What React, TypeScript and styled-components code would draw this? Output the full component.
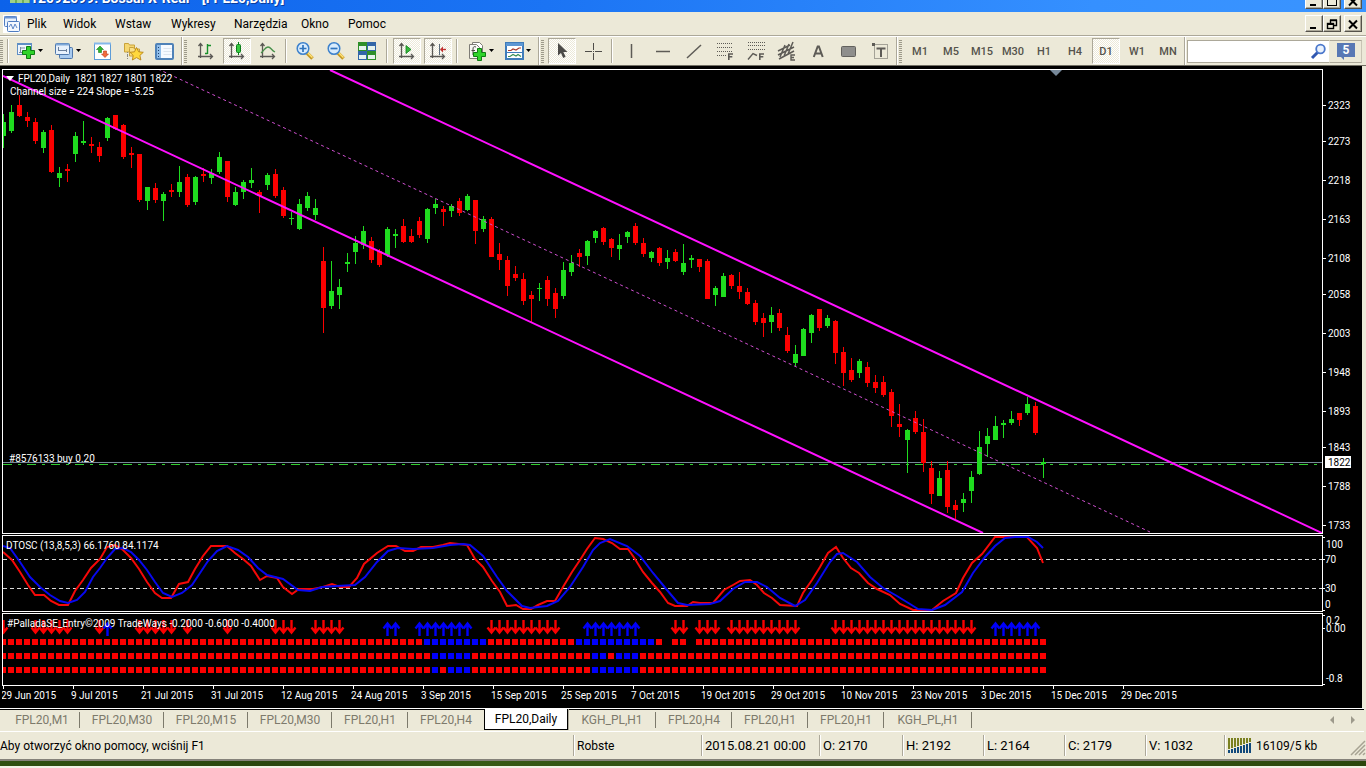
import React from "react";
import styled, { createGlobalStyle, css } from "styled-components";

const FONT = `Roboto, "Liberation Sans", sans-serif`;
const FACE = "#ece9d8";
const SHADOW = "#aca899";

const GlobalStyle = createGlobalStyle`
  *, *::before, *::after { box-sizing: border-box; }
  body { margin: 0; background: ${FACE}; font-family: ${FONT}; }
  button, input { font-family: inherit; margin: 0; }
`;

/* ---------- window frame ---------- */

const Page = styled.div`
  min-height: 100vh;
  display: flex;
  flex-direction: column;
  background: ${FACE};
`;

const TitleBar = styled.header`
  height: 12px;
  overflow: hidden;
  display: flex;
  align-items: flex-end;
  padding: 0 4px 0 10px;
  background: linear-gradient(90deg, #0c62ea 0%, #1b74f4 40%, #3590ff 80%, #3a94ff 100%);
`;

const TitleIcon = styled.div`
  align-self: flex-start;
  width: 20px;
  height: 3px;
  background: repeating-linear-gradient(90deg, #9fd28a 0 5px, #6fae58 5px 7px);
`;

const Title = styled.h1`
  flex: 1;
  margin: 0;
  height: 28px;
  line-height: 28px;
  font-size: 14px;
  font-weight: 700;
  color: #fff;
  text-shadow: 1px 1px 0 #0a3c9c;
  white-space: pre;
`;

const FrameButtons = styled.div<{ $gap?: number }>`
  display: flex;
  align-items: center;
  padding-bottom: ${(p) => p.$gap ?? 0}px;
`;

const FrameButton = styled.button<{ $apart?: boolean }>`
  width: 18px;
  height: 17px;
  padding: 0;
  margin-left: ${(p) => (p.$apart ? 3 : 0)}px;
  display: flex;
  align-items: center;
  justify-content: center;
  background: ${FACE};
  border: 1px solid;
  border-color: #fff #55524a #55524a #fff;
  box-shadow: inset -1px -1px 0 ${SHADOW};
`;

const MenuBar = styled.nav`
  height: 24px;
  display: flex;
  align-items: center;
  padding: 0 4px 0 3px;
  border-bottom: 1px solid ${SHADOW};
`;

const MenuIcon = styled.span`
  width: 17px;
  height: 18px;
  margin-right: 1px;
  display: flex;
`;

const MenuItem = styled.button<{ $w: number }>`
  width: ${(p) => p.$w}px;
  height: 20px;
  padding: 0 6px;
  border: 0;
  background: none;
  font-size: 12px;
  text-align: left;
  color: #000;
`;

const Spring = styled.div`
  flex: 1;
`;

/* ---------- toolbar ---------- */

const ToolBar = styled.div`
  height: 30px;
  display: flex;
  align-items: center;
  padding-right: 4px;
  border-top: 1px solid #fff;
  border-bottom: 1px solid #716f64;
  background: ${FACE};
`;

const Grip = styled.div<{ $w: number }>`
  width: ${(p) => p.$w}px;
  height: 23px;
  background: repeating-linear-gradient(180deg, #9d9a8a 0 1px, transparent 1px 2px) left / 3px 100% no-repeat;
`;

const Separator = styled.div<{ $w: number; $tall?: boolean }>`
  width: ${(p) => p.$w}px;
  height: ${(p) => (p.$tall ? 28 : 24)}px;
  display: flex;
  justify-content: center;
  &::before {
    content: "";
    width: 2px;
    background: ${SHADOW};
    border-right: 1px solid #fff;
  }
`;

const ToolButton = styled.button<{ $on?: boolean; $wide?: boolean }>`
  width: ${(p) => (p.$wide ? 38 : 28)}px;
  height: 26px;
  margin: ${(p) => (p.$wide ? "0" : "0 1px 0 2px")};
  padding: 0;
  display: flex;
  align-items: center;
  justify-content: center;
  gap: 2px;
  border: 1px solid transparent;
  background: none;
  font-size: 11px;
  font-weight: 500;
  color: #55534c;
  ${(p) =>
    p.$on &&
    css`
      border-color: ${SHADOW} #fff #fff ${SHADOW};
      background: repeating-conic-gradient(#fff 0 25%, #ece9d8 0 50%) 0 0 / 2px 2px;
    `}
`;

const SearchBox = styled.label`
  flex: 1;
  min-width: 80px;
  height: 23px;
  display: flex;
  align-items: center;
  padding-right: 2px;
  background: #fff;
  border: 1px solid ${SHADOW};
  border-right: 0;
`;

const SearchInput = styled.input`
  flex: 1;
  min-width: 0;
  height: 19px;
  border: 0;
  outline: 0;
  background: none;
  font-size: 12px;
`;

const BubbleButton = styled.button`
  width: 33px;
  height: 23px;
  padding: 0;
  display: flex;
  align-items: center;
  justify-content: center;
  background: ${FACE};
  border: 1px solid;
  border-color: ${SHADOW} #c8c4b4 ${SHADOW} ${FACE};
`;

/* ---------- chart ---------- */

const ChartArea = styled.main`
  flex: 1;
  margin-right: 4px;
  padding: 3px 0 0 2px;
  display: flex;
  flex-direction: column;
  gap: 1px;
  background: #000;
`;

const Pane = styled.section`
  display: flex;
`;

const Plot = styled.div`
  flex: 1;
  min-width: 0;
  border: 1px solid #fff;
`;

const Drawing = styled.svg`
  display: block;
  width: 100%;
  font-family: ${FONT};
  font-size: 10px;
  fill: #fff;
  text {
    white-space: pre;
  }
`;

const AxisColumn = styled.div`
  width: 39px;
`;

const DateAxis = styled.div`
  margin-top: -1px;
  height: 21px;
`;

/* ---------- tabs and status ---------- */

const TabBar = styled.nav`
  height: 23px;
  display: flex;
  align-items: flex-start;
  padding-left: 4px;
  border-top: 1px solid #000;
  border-bottom: 1px solid #fff;
  margin: 1px 2px 0 0;
  box-shadow: 0 -1px 0 #fff;
`;

const Tab = styled.button<{ $w: number; $active?: boolean; $plain?: boolean }>`
  width: ${(p) => p.$w}px;
  height: 20px;
  padding: 0;
  border: 0;
  background: none;
  font-size: 12px;
  line-height: 18px;
  color: #7d7a6c;
  position: relative;
  &::after {
    content: "";
    display: ${(p) => (p.$plain || p.$active ? "none" : "block")};
    position: absolute;
    right: 0;
    top: 2px;
    width: 1px;
    height: 16px;
    background: #7d7a6c;
  }
  ${(p) =>
    p.$active &&
    css`
      height: 21px;
      line-height: 20px;
      margin-top: -1px;
      background: #fff;
      color: #000;
      border: 1px solid #000;
      border-top: 0;
      box-shadow: 1px 0 0 ${SHADOW};
    `}
`;

const TabScroll = styled.button`
  width: 21px;
  height: 20px;
  padding: 0;
  border: 0;
  background: none;
  display: flex;
  align-items: center;
  justify-content: center;
`;

const StatusBar = styled.footer`
  height: 27px;
  display: flex;
  align-items: center;
  font-size: 12px;
  color: #000;
`;

const StatusHelp = styled.div`
  flex: 1;
  font-size: 12px;
  white-space: nowrap;
  overflow: hidden;
`;

const StatusCell = styled.div<{ $w: number; $big?: boolean }>`
  width: ${(p) => p.$w}px;
  height: 21px;
  padding-left: 3px;
  display: flex;
  align-items: center;
  gap: 4px;
  border-left: 1px solid ${SHADOW};
  box-shadow: inset 1px 0 0 #fff;
  font-size: ${(p) => (p.$big ? 13 : 12)}px;
  white-space: nowrap;
`;

const ResizeCorner = styled.svg`
  align-self: flex-end;
  margin-left: auto;
`;

const Desktop = styled.div`
  height: 9px;
  border-top: 2px solid #85827a;
  border-bottom: 2px solid #f1f3e6;
  background: linear-gradient(90deg, #2f5010, #2a470e 20%, #375a14 35%, #2c4a10 60%, #35520f 80%, #2b470d);
`;

/* ---------- data ---------- */

type Candle = [1 | 0, number, number, number, number];

// [rising, high, body top, body bottom, low] in vertical plot units
const CANDLES: Candle[] = [
  [1,114,122,136,148],[1,105,112,131,133],[0,95,105,116,117],[0,112,117,121,127],[0,118,122,141,144],
  [1,130,132,148,153],[0,125,130,172,173],[1,167,173,178,187],[0,164,169,171,182],[1,132,136,154,162],
  [1,121,141,143,145],[0,137,144,146,153],[0,142,147,156,162],[1,117,118,138,141],[0,115,115,129,130],
  [0,124,125,157,159],[0,147,153,155,168],[0,154,154,200,202],[1,187,187,201,210],[0,183,188,200,203],
  [1,192,194,201,221],[0,184,190,192,197],[1,166,182,192,197],[0,174,177,205,207],[1,176,177,202,205],
  [0,168,174,176,182],[1,169,173,178,184],[1,152,157,172,174],[0,161,161,197,202],[1,187,192,205,206],
  [1,180,182,192,199],[1,168,180,183,188],[0,190,192,196,213],[1,173,175,185,190],[0,169,174,196,198],
  [0,187,190,216,218],[1,212,218,219,225],[1,199,204,229,230],[1,192,196,208,211],[1,199,208,215,220],
  [0,247,261,308,333],[1,261,291,306,309],[1,279,287,295,309],[1,253,262,264,272],[1,236,243,252,264],
  [1,226,231,245,249],[0,237,241,260,263],[0,249,251,265,267],[1,227,229,255,257],[1,229,234,236,248],
  [0,219,226,242,243],[0,229,236,242,243],[0,217,221,235,238],[1,208,209,239,243],[1,199,204,208,214],
  [0,206,209,212,226],[1,204,206,211,217],[0,198,201,213,216],[1,194,196,210,211],[0,200,200,231,244],
  [1,216,219,229,232],[0,217,219,257,257],[0,243,254,260,270],[0,256,260,286,296],[0,266,274,278,281],
  [0,273,279,301,305],[0,291,295,299,322],[1,283,288,289,301],[0,276,280,299,306],[0,288,293,309,318],
  [1,262,270,296,299],[1,255,263,272,276],[0,249,253,257,267],[1,240,241,256,265],[1,230,231,238,243],
  [0,227,228,242,245],[0,238,239,248,257],[1,234,245,249,260],[1,231,232,237,243],[0,223,226,243,245],
  [0,238,243,254,257],[1,251,252,258,262],[0,247,248,263,266],[1,250,258,262,269],[0,249,252,261,262],
  [1,244,263,272,275],[1,255,258,260,268],[0,259,259,267,272],[0,259,261,299,299],[1,286,288,295,306],
  [1,273,276,297,297],[0,274,275,286,289],[0,272,286,292,299],[0,288,292,304,305],[0,300,303,322,325],
  [0,313,318,323,337],[1,307,315,322,333],[0,309,313,328,331],[0,327,335,351,353],[1,345,354,363,366],
  [1,328,329,356,356],[1,314,315,333,343],[0,309,309,328,331],[1,315,318,326,328],[0,320,321,353,364],
  [0,347,352,373,386],[0,358,370,380,382],[1,359,361,373,378],[0,362,367,383,387],[0,375,382,388,393],
  [0,376,382,395,397],[0,389,392,416,427],[0,404,424,427,437],[1,429,430,440,473],[0,411,418,432,434],
  [0,419,432,463,472],[0,461,468,494,504],[1,471,478,496,496],[0,461,470,507,513],[0,500,505,510,519],
  [1,493,499,503,512],[1,471,477,491,503],[1,431,447,474,475],[1,428,436,444,457],[1,416,426,440,440],
  [1,420,423,425,438],[1,411,419,423,425],[0,413,413,420,426],[1,397,404,413,415],[0,402,406,433,435],
  [1,458,462,464,478],
];

const barX = (i: number) => 3 + 8 * i;

const PRICES: [string, number][] = [
  ["2323", 105], ["2273", 141], ["2218", 180], ["2163", 219], ["2108", 258], ["2058", 294],
  ["2003", 333], ["1948", 372], ["1893", 411], ["1843", 447], ["1788", 486], ["1733", 525],
];

const OSC_FAST =
  "3,552 12,560 20,572 28,585 35,595 44,595 51,601 59,605 68,605 75,591 83,580 91,568 100,559 107,547 115,545 123,550 131,558 139,569 147,582 155,593 162,598 171,598 179,584 188,582 195,569 203,556 211,546 227,546 235,553 243,559 251,566 260,580 267,576 277,578 283,587 292,594 299,589 313,589 323,587 332,584 340,587 349,587 357,578 364,564 377,553 388,546 396,546 405,551 413,551 421,547 433,547 443,545 450,543 467,545 475,559 483,567 492,581 500,592 507,606 516,605 523,609 531,609 538,605 547,601 555,601 563,587 572,572 580,560 587,549 595,538 603,539 612,543 620,549 628,549 635,559 643,572 652,583 660,592 668,603 675,606 687,606 693,602 700,603 713,603 724,590 733,585 740,581 750,580 757,585 764,593 772,598 780,605 797,606 803,593 812,580 820,567 828,553 836,547 843,558 851,568 859,573 868,583 877,589 890,595 900,604 913,610 932,610 943,601 956,593 963,578 972,563 982,554 995,537 1008,537 1027,537 1037,548 1043,563";
const OSC_SLOW =
  "3,546 10,548 20,562 30,577 40,587 50,595 60,601 68,603 77,600 85,592 93,577 100,568 107,558 115,549 123,548 131,552 139,560 147,570 155,582 163,593 172,597 182,593 192,585 200,573 208,561 217,551 227,546 238,550 248,557 258,568 267,575 283,579 298,590 310,591 322,587 337,586 355,585 365,577 377,562 388,551 398,548 413,549 433,548 450,545 463,544 470,545 483,556 497,577 507,591 522,606 530,608 547,606 558,601 570,587 583,567 593,550 600,543 610,539 627,546 640,556 653,573 667,590 678,603 687,605 710,604 720,601 733,589 745,582 757,582 767,587 780,598 795,606 805,600 817,583 830,562 837,554 843,553 857,562 870,577 883,588 897,596 910,604 918,609 932,610 945,605 962,592 973,573 985,557 995,546 1005,538 1015,537 1028,537 1037,542 1043,548";

const range = (a: number, b: number) => Array.from({ length: b - a + 1 }, (_, i) => a + i);

const SELL = [
  0, ...range(4, 8), 12, ...range(17, 21), 23, 28, ...range(34, 36), ...range(39, 42), ...range(61, 69),
  84, 85, ...range(87, 89), ...range(91, 99), ...range(104, 121),
];
const BUY = [13, 48, 49, ...range(52, 58), ...range(73, 79), ...range(124, 129)];

const TREND_ROWS = [
  { y: 639, blue: [...range(53, 60), ...range(72, 81)], skip: [83, 86] },
  { y: 653, blue: [...range(54, 58), 74, 75, 77, 78, 79], skip: [] as number[] },
  { y: 667, blue: [54, 56, 57, 58, ...range(74, 79)], skip: [] as number[] },
];

const DATES = [
  "29 Jun 2015", "9 Jul 2015", "21 Jul 2015", "31 Jul 2015", "12 Aug 2015", "24 Aug 2015", "3 Sep 2015",
  "15 Sep 2015", "25 Sep 2015", "7 Oct 2015", "19 Oct 2015", "29 Oct 2015", "10 Nov 2015", "23 Nov 2015",
  "3 Dec 2015", "15 Dec 2015", "29 Dec 2015",
];

const MENU: [string, number][] = [
  ["Plik", 36], ["Widok", 52], ["Wstaw", 56], ["Wykresy", 63], ["Narzędzia", 67], ["Okno", 47], ["Pomoc", 52],
];

const TABS: [string, number][] = [
  ["FPL20,M1", 76], ["FPL20,M30", 84], ["FPL20,M15", 84], ["FPL20,M30", 84], ["FPL20,H1", 76], ["FPL20,H4", 76],
  ["FPL20,Daily", 84], ["KGH_PL,H1", 88], ["FPL20,H4", 76], ["FPL20,H1", 76], ["FPL20,H1", 76], ["KGH_PL,H1", 88],
];
const ACTIVE_TAB = 6;

const PERIODS = ["M1", "M5", "M15", "M30", "H1", "H4", "D1", "W1", "MN"];

const READOUTS: [string, number][] = [
  ["2015.08.21 00:00", 118], ["O: 2170", 83], ["H: 2192", 81], ["L: 2164", 81], ["C: 2179", 81], ["V: 1032", 79],
];

/* ---------- icons ---------- */

const Icon = ({ w = 20, h = 20, children }: { w?: number; h?: number; children: React.ReactNode }) => (
  <svg width={w} height={h} viewBox={`0 0 ${w} ${h}`} fill="none" aria-hidden="true">
    {children}
  </svg>
);

const DropArrow = () => (
  <Icon w={5} h={4}>
    <path d="M0 0h5L2.500 3z" fill="#000" />
  </Icon>
);

const Plus = ({ x, y }: { x: number; y: number }) => (
  <path
    transform={`translate(${x} ${y})`}
    d="M4.500.5h4v4h4v4h-4v4h-4v-4h-4v-4h4z"
    fill="#2fd32a"
    stroke="#0d7d12"
  />
);

const NewOrderIcon = () => (
  <Icon w={20} h={18}>
    <rect x="1.500" y="1.500" width="14" height="11" fill="#eef5fd" stroke="#5f8fc4" />
    <path d="M1 2h15" stroke="#5f8fc4" strokeWidth="2" />
    <path d="M4.500 5v5M3 10.500h3M4 6h5" stroke="#7d8da3" />
    <Plus x={6} y={4} />
  </Icon>
);
const WindowsIcon = () => (
  <Icon w={20} h={18}>
    <rect x="5.500" y="5.500" width="13" height="11" rx="1" fill="#a9cbef" stroke="#4f78ac" />
    <rect x="1.500" y="1.500" width="14" height="11" rx="1" fill="#e7f1fc" stroke="#4f78ac" />
    <path d="M2 2.500h13" stroke="#7ea8d8" strokeWidth="2" />
    <path d="M4.500 5v4M4 8.500h9M12.500 7v3" stroke="#6a7f9c" />
  </Icon>
);
const MarketIcon = () => (
  <Icon w={19} h={19}>
    <rect x="1.500" y="1.500" width="16" height="16" fill="#fff" stroke="#5d9cd8" />
    <path d="M1 1.500h17" stroke="#86b8ea" strokeWidth="2" />
    <path d="M7 4l3.500 3.500H8.500v3h-3v-3H3.500z" fill="#2db52d" stroke="#1a7d1f" strokeWidth=".6" />
    <path d="M12 15.500L8.500 12h2V9h3v3h2z" fill="#f26a3c" stroke="#c03a1a" strokeWidth=".6" />
  </Icon>
);
const FavoritesIcon = () => (
  <Icon w={21} h={19}>
    <path d="M1.500 3V1.500h4l1 1.500h5v7h-10z" fill="#f5d772" stroke="#c9a23a" />
    <path d="M4.500 10v7M4 13.500h3" stroke="#8a8a80" strokeDasharray="1 1" />
    <path d="M6.500 6.500v-1h4l1 1.500h5v7h-10z" fill="#f9e08a" stroke="#c9a23a" />
    <path d="M13.500 5.500l2.200 4.300 4.600.5-3.400 3.100 1 4.600-4.400-2.400-4.100 2.400.8-4.600-3.200-3.100 4.500-.5z" fill="#ffd83d" stroke="#b98416" strokeWidth=".9" />
  </Icon>
);
const NavigatorIcon = () => (
  <Icon w={19} h={17}>
    <rect x="1" y="1" width="17" height="15" rx="1" fill="#f6faff" stroke="#4f82b8" strokeWidth="2" />
    <rect x="2" y="2" width="4" height="13" fill="#8fbdea" />
    <path d="M3.500 4v10" stroke="#1f3f6a" strokeDasharray="1 2" />
    <path d="M8.500 5.500h8M8.500 8.500h8M8.500 11.500h8" stroke="#dde5ee" />
  </Icon>
);

const Axes = () => (
  <path d="M4.500 3v14M2 15.500h14M2.500 5l2-2.500 2 2.500M14 13l2.500 2.500L14 18" stroke="#5a5854" strokeWidth="1.300" />
);
const BarsIcon = () => (
  <Icon>
    <Axes />
    <path d="M11.500 3v10M9 12.500h2.500M11.500 4.500H15" stroke="#17902a" strokeWidth="1.400" />
  </Icon>
);
const CandlesIcon = () => (
  <Icon>
    <Axes />
    <path d="M11.500 1v13" stroke="#0d7d1c" />
    <rect x="9.500" y="3.500" width="4" height="8" rx="1" fill="#35c83f" stroke="#0d7d1c" />
  </Icon>
);
const LineIcon = () => (
  <Icon>
    <Axes />
    <path d="M3 12C6 10 7 6 10 6c3 0 3 3 7 5" stroke="#47904a" strokeWidth="1.300" />
  </Icon>
);
const ZoomIcon = ({ plus }: { plus?: boolean }) => (
  <Icon>
    <path d="M12 12l5.500 5.500" stroke="#c79a22" strokeWidth="3.600" />
    <path d="M12.500 11.500l5 5" stroke="#ffe27a" strokeWidth="1.500" />
    <circle cx="8" cy="7.500" r="5.800" fill="#d8ecfd" stroke="#3d82cc" strokeWidth="1.500" />
    <path d={plus ? "M4.500 7.500h7M8 4v7" : "M4.500 7.500h7"} stroke="#2f74bd" strokeWidth="1.700" />
  </Icon>
);
const TilesIcon = () => (
  <Icon>
    {[
      [1, 1, "#2f8f2a"], [10, 1, "#3266a8"], [1, 10, "#3266a8"], [10, 10, "#2f8f2a"],
    ].map(([x, y, c]) => (
      <g key={`${x}-${y}`}>
        <rect x={x} y={y} width="9" height="9" fill={c as string} />
        <rect x={(x as number) + 1} y={(y as number) + 4} width="7" height="4" fill="#e6f2ee" />
      </g>
    ))}
  </Icon>
);
const ScrollIcon = () => (
  <Icon>
    <Axes />
    <path d="M9 4.500l5 4-5 4z" fill="#35b83a" stroke="#11801c" strokeWidth=".8" />
  </Icon>
);
const ShiftIcon = () => (
  <Icon>
    <Axes />
    <path d="M11.500 3v11" stroke="#5a6a7a" />
    <path d="M18 8.500h-5" stroke="#c03030" strokeWidth="1.400" />
    <path d="M12 8.500l3-3v6z" fill="#c03030" />
  </Icon>
);
const IndicatorIcon = () => (
  <Icon w={20} h={20}>
    <path d="M5.500 3.500v-2h7l3 3v8" fill="#fff" stroke="#7e7c76" />
    <path d="M2.500 3.500h7l3 3v11h-10z" fill="#f8f8f5" stroke="#7e7c76" />
    <path d="M9 6c-2-1-3 0-3 2v6M4.500 9.500H8" stroke="#4d4b47" />
    <Plus x={6} y={7} />
  </Icon>
);
const TemplateIcon = () => (
  <Icon w={19} h={18}>
    <rect x="1" y="1" width="17" height="16" fill="#fff" stroke="#3f7cba" strokeWidth="2" />
    <path d="M1 2.500h17" stroke="#5c97d4" strokeWidth="3" />
    <path d="M3 8.500h3l2-1.500 3 1 3-2h2" stroke="#a83a2c" strokeWidth="1.200" />
    <path d="M2 10.500h15" stroke="#3f7cba" />
    <path d="M3 14.500h2l3-2 3 1.500 2-1.500 3 2" stroke="#3b8f55" strokeWidth="1.200" />
  </Icon>
);
const CursorIcon = () => (
  <Icon>
    <path d="M6 2v12.500l3-2.600 2.200 5 2.400-1.100-2.200-4.700h4z" fill="#4b4a47" />
  </Icon>
);
const CrosshairIcon = () => (
  <Icon>
    <path d="M10.500 2v7M10.500 12v7M2 10.500h7M12 10.500h7" stroke="#4f4d49" />
    <path d="M10 10.500h1" stroke="#4f4d49" />
  </Icon>
);
const VLineIcon = () => (
  <Icon>
    <path d="M9.500 3v14" stroke="#5d5b56" strokeWidth="1.500" />
  </Icon>
);
const HLineIcon = () => (
  <Icon>
    <path d="M3 10.500h14" stroke="#5d5b56" strokeWidth="1.500" />
  </Icon>
);
const TrendIcon = () => (
  <Icon>
    <path d="M3 17L17 4" stroke="#5d5b56" strokeWidth="1.500" />
  </Icon>
);
const FLetter = () => <path d="M13.800 19v-6h4.200M13.800 15.700h3.500" stroke="#5d5b56" strokeWidth="1.600" />;
const FiboIcon = () => (
  <Icon>
    <path d="M2 2.500h16M2 6.500h16M2 10.500h16M2 14.500h10" stroke="#5d5b56" strokeDasharray="1 1" />
    <FLetter />
  </Icon>
);
const FanIcon = () => (
  <Icon>
    <path d="M2 1.500h17M2 4.500h17M2 8.500h17" stroke="#5d5b56" strokeDasharray="1 1" />
    <path d="M2 18.500l5-6 4 2" stroke="#5d5b56" strokeWidth="1.400" />
    <FLetter />
  </Icon>
);
const ChannelIcon = () => (
  <Icon>
    <path d="M1 10L13 4M1 14L17 6M2 18L17 10M3 16L8 4M7 15L12 3M11 13L16 1" stroke="#5d5b56" strokeWidth="1.500" />
    <path d="M18 14h-4v5h4M14 16.500h3" stroke="#5d5b56" strokeWidth="1.400" />
  </Icon>
);
const TextIcon = () => (
  <Icon>
    <path d="M5.800 16L9.700 5.500h1.200L14.700 16M7.300 12.500h6" stroke="#5d5b56" strokeWidth="2" />
  </Icon>
);
const RectIcon = () => (
  <Icon>
    <rect x="2.500" y="5.500" width="14" height="10" rx="1" fill="#8e8e8c" stroke="#62615d" />
  </Icon>
);
const LabelIcon = () => (
  <Icon>
    <rect x="4.500" y="3.500" width="13" height="14" stroke="#5d5b56" strokeDasharray="1 1" />
    <path d="M6.500 7.500h9M11 7v9" stroke="#5d5b56" strokeWidth="2" />
    <path d="M2 2h3v3H2z" fill="#5d5b56" />
  </Icon>
);
const SearchIcon = () => (
  <Icon w={17} h={17}>
    <path d="M7.500 9.500L2 15" stroke="#3057b0" strokeWidth="3" />
    <circle cx="10.500" cy="6" r="4.300" fill="#eaf2fd" stroke="#4b78cc" strokeWidth="1.800" />
  </Icon>
);
const BubbleIcon = () => (
  <svg width="20" height="18" viewBox="0 0 20 18" aria-hidden="true">
    <path d="M1 1h18v14H8v3l-3-3H1z" fill="#5878b4" />
    <text x="10" y="12" textAnchor="middle" fill="#fff" fontSize="12" fontWeight="700" fontFamily="Roboto, sans-serif">
      5
    </text>
  </svg>
);
const AppIcon = () => (
  <Icon w={17} h={18}>
    <rect x="0" y="0" width="17" height="18" fill="#fff" />
    <rect x="1.500" y="1.500" width="12" height="10" rx="1" fill="#e8f1fc" stroke="#4f7cc0" />
    <path d="M1 2.500h13" stroke="#6b95d4" strokeWidth="2" />
    <rect x="4.500" y="6.500" width="12" height="10" rx="1" fill="#f4f8fe" stroke="#4f7cc0" />
    <path d="M6 12l2-3 2 5 2-5 2 4" stroke="#5f88c8" />
  </Icon>
);
const MinIcon = () => (
  <Icon w={12} h={12}>
    <path d="M2 10h6" stroke="#000" strokeWidth="2" />
  </Icon>
);
const MaxIcon = () => (
  <Icon w={12} h={12}>
    <rect x="1.500" y="2.500" width="9" height="8" stroke="#000" />
  </Icon>
);
const RestoreIcon = () => (
  <Icon w={12} h={12}>
    <path d="M4.500 5V2.500h6v5H8M4 2h7" stroke="#000" strokeWidth="1.400" />
    <rect x="1.500" y="5.500" width="6" height="5" stroke="#000" strokeWidth="1.400" />
    <path d="M1 6h7" stroke="#000" strokeWidth="2" />
  </Icon>
);
const CloseIcon = () => (
  <Icon w={12} h={12}>
    <path d="M2 2.500l8 8M10 2.500l-8 8" stroke="#000" strokeWidth="2" />
  </Icon>
);
const TrafficIcon = () => (
  <Icon w={24} h={16}>
    {range(0, 7).map((i) => (
      <g key={i}>
        <rect x={i * 3} y="0" width="2" height={11 - i} fill="#7a8020" />
        <rect x={i * 3} y={12 - i} width="2" height={3 + i} fill="#124a7c" />
      </g>
    ))}
  </Icon>
);

/* ---------- plots ---------- */

const PricePlot = () => (
  <Drawing height="463" role="img" aria-label="FPL20 daily candles">
    <g transform="translate(-3 -70)" shapeRendering="crispEdges">
      <rect x="3" y="462" width="100%" height="1" fill="#778899" />
      <line x1="3" x2="4000" y1="464.500" y2="464.500" stroke="#32cd32" strokeDasharray="9 6 3 6" />
      {CANDLES.map(([up, high, top, bottom, low], i) => (
        <g key={i} fill={up ? "#1fdc1f" : "#fb0000"}>
          <rect x={barX(i)} y={high} width="1" height={low - high} />
          <rect x={barX(i) - 2} y={top} width="5" height={bottom - top} />
        </g>
      ))}
    </g>
    <g transform="translate(-3 -70)">
      <path d="M158 69L1150 532" stroke="#cf4fcf" strokeDasharray="3 3" fill="none" />
      <path d="M330 70L1322 533M3 76L983 533" stroke="#ff10ff" strokeWidth="2" fill="none" />
      <path d="M1050 70h12l-6 6z" fill="#778899" />
      <path d="M6 76h8l-4 5z" />
      <text x="18" y="82">FPL20,Daily  1821 1827 1801 1822</text>
      <text x="10" y="95">Channel size = 224 Slope = -5.25</text>
      <text x="9" y="462">#8576133 buy 0.20</text>
    </g>
  </Drawing>
);

const PriceAxis = () => (
  <Drawing height="465" aria-label="Price scale">
    <g transform="translate(-1323 -69)">
      {PRICES.map(([label, y]) => (
        <g key={label}>
          <rect x="1323" y={y} width="3" height="1" />
          <text x="1328" y={y + 4}>{label}</text>
        </g>
      ))}
      <rect x="1325" y="456" width="26" height="12" />
      <text x="1328" y="466" fill="#000">1822</text>
    </g>
  </Drawing>
);

const OscPlot = () => (
  <Drawing height="75" role="img" aria-label="DTOSC oscillator">
    <g transform="translate(-3 -536)">
      <path d="M3 559.500H4000M3 588.500H4000" stroke="#d8d8d8" strokeDasharray="4 3" fill="none" />
      <polyline points={OSC_FAST} fill="none" stroke="#f50808" strokeWidth="2" />
      <polyline points={OSC_SLOW} fill="none" stroke="#0808f0" strokeWidth="2" />
      <text x="6" y="549">DTOSC (13,8,5,3) 66.1760 84.1174</text>
    </g>
  </Drawing>
);

const OscAxis = () => (
  <Drawing height="77" aria-label="Oscillator scale">
    <g transform="translate(-1323 -535)">
      <path d="M1323 537h2v1h-2zM1323 559h2v1h-2zM1323 588h2v1h-2zM1323 610h2v1h-2z" />
      <text x="1326" y="548">100</text>
      <text x="1325" y="563">70</text>
      <text x="1325" y="592">30</text>
      <text x="1325" y="608">0</text>
    </g>
  </Drawing>
);

const TrendPlot = () => (
  <Drawing height="71" role="img" aria-label="PalladaSE entry signals">
    <g transform="translate(-3 -614)">
      {SELL.map((i) => (
        <path
          key={i}
          transform={`translate(${barX(i)} 620)`}
          d="M.5 0v12M-3.500 7.500l4 5 4-5"
          fill="none"
          stroke="#fa0000"
          strokeWidth="2.400"
        />
      ))}
      {BUY.map((i) => (
        <path
          key={i}
          transform={`translate(${barX(i)} 622)`}
          d="M.5 14V2M-3.500 6.500l4-5 4 5"
          fill="none"
          stroke="#0000fa"
          strokeWidth="2.400"
        />
      ))}
      <g shapeRendering="crispEdges">
        {TREND_ROWS.map((row) =>
          range(0, 130)
            .filter((i) => !row.skip.includes(i))
            .map((i) => (
              <rect
                key={`${row.y}-${i}`}
                x={barX(i) - 3}
                y={row.y}
                width="6"
                height="6"
                fill={row.blue.includes(i) ? "#0000fa" : "#fa0000"}
              />
            ))
        )}
      </g>
      <text x="7" y="627">#PalladaSE_Entry©2009 TradeWays -0.2000 -0.6000 -0.4000</text>
    </g>
  </Drawing>
);

const TrendAxis = () => (
  <Drawing height="73" aria-label="Signal scale">
    <g transform="translate(-1323 -613)">
      <path d="M1323 615h2v1h-2zM1323 628h2v1h-2zM1323 684h2v1h-2z" />
      <text x="1326" y="624">0.2</text>
      <text x="1326" y="632">0.00</text>
      <text x="1326" y="682">-0.8</text>
    </g>
  </Drawing>
);

/* ---------- page ---------- */

export default function App() {
  return (
    <Page>
      <GlobalStyle />
      <TitleBar>
        <TitleIcon />
        <Title>{"12092099: BossaFX-Real - [FPL20,Daily]"}</Title>
        <FrameButtons $gap={3}>
          <FrameButton aria-label="Minimize"><MinIcon /></FrameButton>
          <FrameButton aria-label="Maximize"><MaxIcon /></FrameButton>
          <FrameButton $apart aria-label="Close"><CloseIcon /></FrameButton>
        </FrameButtons>
      </TitleBar>

      <MenuBar>
        <MenuIcon><AppIcon /></MenuIcon>
        {MENU.map(([label, w]) => (
          <MenuItem key={label} $w={w}>{label}</MenuItem>
        ))}
        <Spring />
        <FrameButtons>
          <FrameButton aria-label="Minimize chart"><MinIcon /></FrameButton>
          <FrameButton aria-label="Restore chart"><RestoreIcon /></FrameButton>
          <FrameButton $apart aria-label="Close chart"><CloseIcon /></FrameButton>
        </FrameButtons>
      </MenuBar>

      <ToolBar role="toolbar">
        <Grip $w={6} />
        <Separator $w={4} />
        <ToolButton $wide aria-label="New chart"><NewOrderIcon /><DropArrow /></ToolButton>
        <ToolButton $wide aria-label="Profiles"><WindowsIcon /><DropArrow /></ToolButton>
        <ToolButton aria-label="Market watch"><MarketIcon /></ToolButton>
        <ToolButton aria-label="Favorites"><FavoritesIcon /></ToolButton>
        <ToolButton aria-label="Navigator"><NavigatorIcon /></ToolButton>
        <Separator $w={5} $tall />
        <Grip $w={6} />
        <ToolButton aria-label="Bar chart"><BarsIcon /></ToolButton>
        <ToolButton $on aria-label="Candlesticks"><CandlesIcon /></ToolButton>
        <ToolButton aria-label="Line chart"><LineIcon /></ToolButton>
        <Separator $w={6} />
        <ToolButton aria-label="Zoom in"><ZoomIcon plus /></ToolButton>
        <ToolButton aria-label="Zoom out"><ZoomIcon /></ToolButton>
        <ToolButton aria-label="Tile windows"><TilesIcon /></ToolButton>
        <Separator $w={9} />
        <ToolButton $on aria-label="Auto scroll"><ScrollIcon /></ToolButton>
        <ToolButton $on aria-label="Chart shift"><ShiftIcon /></ToolButton>
        <Separator $w={8} />
        <ToolButton $wide aria-label="Indicators"><IndicatorIcon /><DropArrow /></ToolButton>
        <ToolButton $wide aria-label="Templates"><TemplateIcon /><DropArrow /></ToolButton>
        <Separator $w={4} $tall />
        <Grip $w={5} />
        <ToolButton $on aria-label="Cursor"><CursorIcon /></ToolButton>
        <ToolButton aria-label="Crosshair"><CrosshairIcon /></ToolButton>
        <Separator $w={8} />
        <ToolButton aria-label="Vertical line"><VLineIcon /></ToolButton>
        <ToolButton aria-label="Horizontal line"><HLineIcon /></ToolButton>
        <ToolButton aria-label="Trend line"><TrendIcon /></ToolButton>
        <ToolButton aria-label="Fibonacci retracement"><FiboIcon /></ToolButton>
        <ToolButton aria-label="Fibonacci fan"><FanIcon /></ToolButton>
        <ToolButton aria-label="Equidistant channel"><ChannelIcon /></ToolButton>
        <ToolButton aria-label="Text"><TextIcon /></ToolButton>
        <ToolButton aria-label="Rectangle"><RectIcon /></ToolButton>
        <ToolButton aria-label="Text label"><LabelIcon /></ToolButton>
        <Separator $w={4} $tall />
        <Grip $w={5} />
        {PERIODS.map((p) => (
          <ToolButton key={p} $on={p === "D1"}>{p}</ToolButton>
        ))}
        <Separator $w={4} $tall />
        <SearchBox>
          <SearchInput type="text" aria-label="Search" />
          <SearchIcon />
        </SearchBox>
        <BubbleButton aria-label="Messages"><BubbleIcon /></BubbleButton>
      </ToolBar>

      <ChartArea>
        <Pane>
          <Plot><PricePlot /></Plot>
          <AxisColumn><PriceAxis /></AxisColumn>
        </Pane>
        <Pane>
          <Plot><OscPlot /></Plot>
          <AxisColumn><OscAxis /></AxisColumn>
        </Pane>
        <Pane>
          <Plot><TrendPlot /></Plot>
          <AxisColumn><TrendAxis /></AxisColumn>
        </Pane>
        <DateAxis>
          <Drawing height="21" aria-label="Date scale">
            <g transform="translate(-2 0)">
              {DATES.map((d, i) => (
                <g key={d}>
                  <rect x={3 + 70 * i} y="0" width="1" height="3" />
                  <text x={1 + 70 * i} y="13">{d}</text>
                </g>
              ))}
            </g>
          </Drawing>
        </DateAxis>
      </ChartArea>

      <TabBar role="tablist">
        {TABS.map(([label, w], i) => (
          <Tab
            key={i}
            role="tab"
            aria-selected={i === ACTIVE_TAB}
            $w={w}
            $active={i === ACTIVE_TAB}
            $plain={i === ACTIVE_TAB - 1}
          >
            {label}
          </Tab>
        ))}
        <Spring />
        <TabScroll aria-label="Previous tabs">
          <Icon w={5} h={8}><path d="M4 0v8L0 4z" fill="#9d9a8c" /></Icon>
        </TabScroll>
        <TabScroll aria-label="Next tabs">
          <Icon w={5} h={8}><path d="M0 0v8l4-4z" fill="#9d9a8c" /></Icon>
        </TabScroll>
      </TabBar>

      <StatusBar>
        <StatusHelp>Aby otworzyć okno pomocy, wciśnij F1</StatusHelp>
        <StatusCell $w={128}>Robste</StatusCell>
        {READOUTS.map(([text, w]) => (
          <StatusCell key={text} $w={w} $big>{text}</StatusCell>
        ))}
        <StatusCell $w={142}>
          <TrafficIcon />
          16109/5 kb
          <ResizeCorner width="16" height="16" viewBox="0 0 16 16" aria-hidden="true">
            <path d="M1 15L15 1M5 15L15 5M9 15l6-6M13 15l2-2" stroke="#a7a393" strokeWidth="1.500" />
          </ResizeCorner>
        </StatusCell>
      </StatusBar>
      <Desktop />
    </Page>
  );
}
